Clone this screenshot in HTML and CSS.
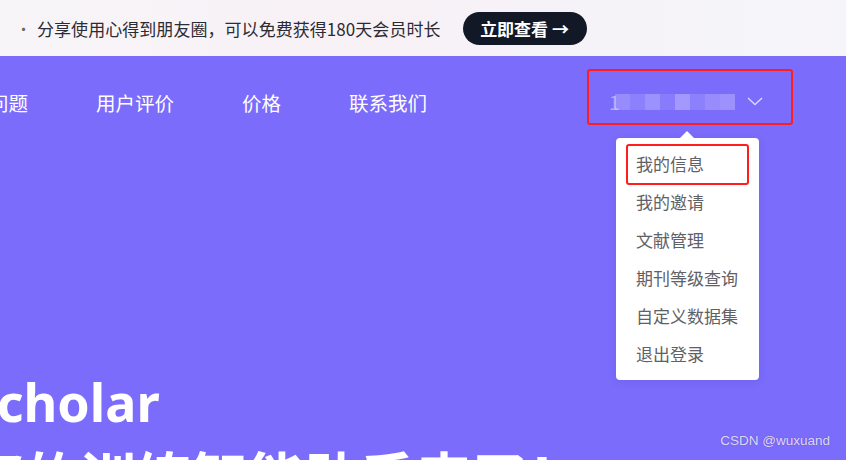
FILE: index.html
```html
<!DOCTYPE html>
<html lang="zh-CN">
<head>
<meta charset="utf-8">
<title>Scholar</title>
<link rel="stylesheet" href="styles.css">
</head>
<body>
<div class="page">
  <div class="banner">
    <span class="banner-dot">·</span>
    <span class="banner-text">分享使用心得到朋友圈，可以免费获得180天会员时长</span>
    <a class="banner-btn">立即查看 →</a>
  </div>
  <div class="hero">
    <nav class="nav">
      <a class="nav-item">常见问题</a>
      <a class="nav-item">用户评价</a>
      <a class="nav-item">价格</a>
      <a class="nav-item">联系我们</a>
      <div class="user">
        <div class="user-name">
          <span class="user-digit">1</span>
          <span class="mosaic">
            <i class="m1"></i><i class="m2"></i><i class="m3"></i><i class="m4"></i><i class="m5"></i><i class="m2"></i><i class="m1"></i><i class="m3"></i>
          </span>
        </div>
        <svg class="chevron" width="16" height="9" viewBox="0 0 16 9"><path d="M1 1 L8 7.5 L15 1" fill="none" stroke="rgba(255,255,255,0.75)" stroke-width="1.3"/></svg>
      </div>
    </nav>
    <div class="hero-body">
      <h1 class="hero-title">Scholar</h1>
      <p class="hero-sub">您的训练智能助手来了！</p>
    </div>
  </div>

  <div class="annot annot-user"></div>

  <div class="dropdown">
    <div class="dropdown-arrow"></div>
    <ul class="menu">
      <li>我的信息</li>
      <li>我的邀请</li>
      <li>文献管理</li>
      <li>期刊等级查询</li>
      <li>自定义数据集</li>
      <li>退出登录</li>
    </ul>
  </div>
  <div class="annot annot-item"></div>

  <div class="watermark">CSDN @wuxuand</div>
</div>
</body>
</html>
```
FILE: styles.css
```css
* { box-sizing: border-box; }
html, body { margin: 0; padding: 0; }
body {
  width: 846px;
  height: 460px;
  overflow: hidden;
  font-family: "Noto Sans CJK SC", "Noto Sans", sans-serif;
}
.page {
  position: relative;
  width: 846px;
  height: 460px;
  overflow: hidden;
  background: #7b6cfc;
}
.banner {
  height: 56px;
  display: flex;
  align-items: center;
  padding-left: 16px;
  background: linear-gradient(90deg, #f7f5f8 0%, #f8f1f6 40%, #f5f3f8 70%, #f6f5f9 100%);
  color: #2b2b33;
}
.banner-dot { font-size: 15px; width: 21px; color: #666; }
.banner-text { font-size: 17px; letter-spacing: 0.05px; }
.banner-btn {
  margin-left: 22px;
  height: 33px;
  width: 124px;
  border-radius: 17px;
  background: #121826;
  color: #fff;
  font-weight: 700;
  font-size: 17px;
  display: flex;
  align-items: center;
  justify-content: center;
}
.hero {
  height: 404px;
  color: #fff;
}
.nav {
  height: 92px;
  display: flex;
  align-items: center;
  margin-left: -50px;
  gap: 68px;
}
.nav-item {
  font-size: 19.5px;
  color: #fff;
  white-space: nowrap;
}
.user {
  display: flex;
  align-items: center;
  margin-left: 114px;
  gap: 18px;
}
.user-name {
  position: relative;
  display: flex;
  align-items: center;
  width: 120px;
  height: 20px;
}
.user-digit {
  font-size: 19px;
  color: rgba(255,255,255,0.45);
  line-height: 20px;
}
.mosaic {
  position: absolute;
  left: 6px;
  top: 2px;
  display: flex;
}
.mosaic i { display: block; width: 15px; height: 16px; }
.m1 { background: rgba(255,255,255,0.22); }
.m2 { background: rgba(255,255,255,0.14); }
.m3 { background: rgba(255,255,255,0.26); }
.m4 { background: rgba(255,255,255,0.10); }
.m5 { background: rgba(255,255,255,0.30); }
.chevron { display: block; margin-top: -2px; }
.hero-body {
  padding-top: 220px;
  margin-left: -32px;
}
.hero-title {
  margin: 0;
  font-family: "Noto Sans", "Noto Sans CJK SC", sans-serif;
  font-size: 52px;
  line-height: 68px;
  font-weight: 700;
}
.hero-sub {
  margin: 5px 0 0 0;
  font-size: 56px;
  line-height: 68px;
  font-weight: 700;
  white-space: nowrap;
}
.annot {
  position: absolute;
  border: 2.5px solid #ff1e1e;
  border-radius: 3px;
}
.annot-user { left: 587px; top: 69px; width: 206px; height: 56px; }
.annot-item { left: 626px; top: 144px; width: 123px; height: 41px; }
.dropdown {
  position: absolute;
  left: 616px;
  top: 138px;
  width: 143px;
  height: 242px;
  background: #fff;
  border-radius: 4px;
  box-shadow: 0 2px 10px rgba(40,30,120,0.12);
}
.dropdown-arrow {
  position: absolute;
  left: 64px;
  top: -7px;
  width: 0;
  height: 0;
  border-left: 7px solid transparent;
  border-right: 7px solid transparent;
  border-bottom: 7px solid #fff;
}
.menu {
  list-style: none;
  margin: 0;
  padding: 7px 0 6px 0;
}
.menu li {
  height: 38px;
  line-height: 38px;
  padding-left: 20px;
  font-size: 17px;
  color: #5f6167;
  white-space: nowrap;
}
.watermark {
  position: absolute;
  right: 16px;
  top: 433px;
  font-family: "Liberation Sans", "Noto Sans", sans-serif;
  font-size: 13.5px;
  color: rgba(255,255,255,0.8);
  text-shadow: 0 0 1px rgba(60,40,140,0.6);
}
```
